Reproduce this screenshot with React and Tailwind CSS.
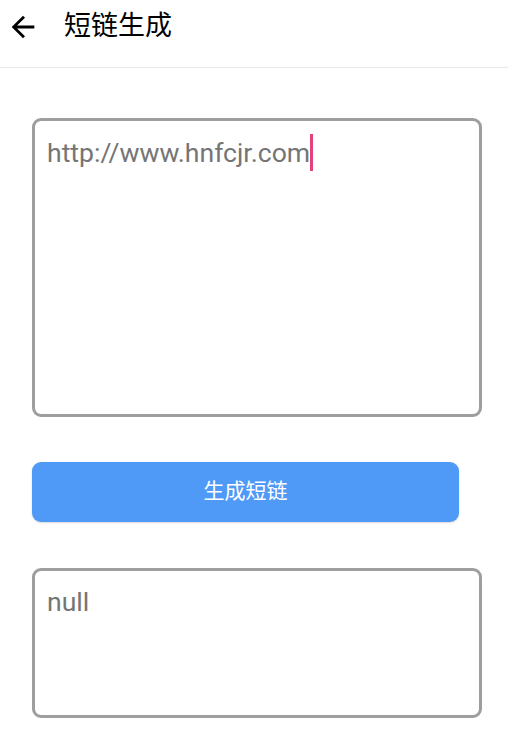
import React from "react";

const ArrowLeft = () => (
  <svg width="34" height="34" viewBox="0 0 24 24" className="text-black">
    <path d="M20 11H7.83l5.59-5.59L12 4l-8 8 8 8 1.41-1.41L7.83 13H20v-2z" fill="currentColor" />
  </svg>
);

const App = () => {
  return (
    <div className="w-[508px] h-[735px] bg-white overflow-hidden font-['Roboto','Noto_Sans_CJK_SC',sans-serif]">
      {/* Header */}
      <div className="h-[68px] flex items-center border-b border-[#e8e8e8] pb-[14px]">
        <div className="w-[64px] flex items-center pl-[6px]">
          <ArrowLeft />
        </div>
        <h1 className="text-[27px] text-black leading-none">短链生成</h1>
      </div>

      <div className="px-[32px] pt-[50px]">
        {/* Input box */}
        <div className="w-[450px] h-[299px] border-[3px] border-[#9e9e9e] rounded-[9px] px-[12px] pt-[13px]">
          <div className="flex items-center text-[26.6px] text-[#757575] leading-[36px]">
            <span>http://www.hnfcjr.com</span>
            <span className="inline-block w-[3px] h-[37px] bg-[#e4407a]" />
          </div>
        </div>

        {/* Button */}
        <button className="mt-[45px] w-[427px] h-[60px] rounded-[9px] bg-[#4f9af7] text-white text-[21px] flex items-center justify-center shadow-[0_1px_2px_rgba(0,0,0,0.15)]">
          生成短链
        </button>

        {/* Output box */}
        <div className="mt-[46px] w-[450px] h-[150px] border-[3px] border-[#9e9e9e] rounded-[9px] px-[12px] pt-[13px]">
          <div className="text-[26.6px] text-[#757575] leading-[36px]">null</div>
        </div>
      </div>
    </div>
  );
};

export default App;
